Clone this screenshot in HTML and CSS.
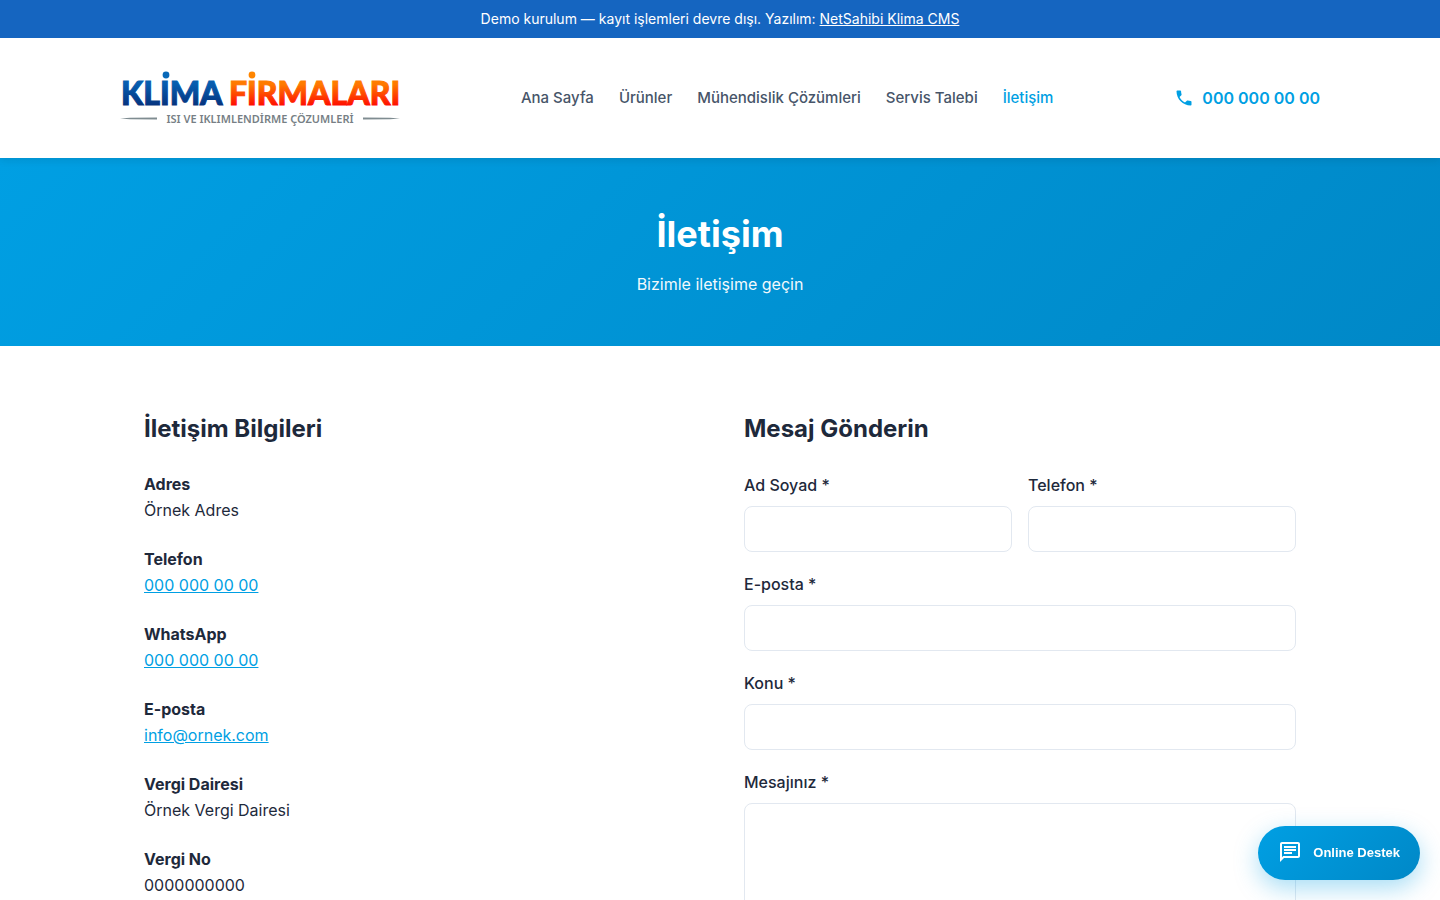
FILE: index.html
```html
<!DOCTYPE html>
<html lang="tr">
<head>
<meta charset="utf-8">
<meta name="viewport" content="width=device-width, initial-scale=1">
<title>İletişim</title>
<link rel="stylesheet" href="styles.css">
</head>
<body>
<div class="demo-bar">Demo kurulum — kayıt işlemleri devre dışı. Yazılım: <a href="#">NetSahibi Klima CMS</a></div>

<header class="site-header">
  <div class="header-inner">
    <a class="logo" href="#" aria-label="Klima Firmaları">
      <svg width="280" height="70" viewBox="0 0 280 70">
        <defs>
          <linearGradient id="blue" gradientUnits="userSpaceOnUse" x1="0" y1="8" x2="0" y2="42">
            <stop offset="0" stop-color="#0868b8"/><stop offset=".4" stop-color="#075cae"/><stop offset="1" stop-color="#05347f"/>
          </linearGradient>
          <linearGradient id="fire" gradientUnits="userSpaceOnUse" x1="0" y1="8" x2="0" y2="42">
            <stop offset="0" stop-color="#ff8a00"/><stop offset=".4" stop-color="#ff7800"/><stop offset="1" stop-color="#ff1000"/>
          </linearGradient>
        </defs>
        <text class="logo-word" x="1" y="42" fill="url(#blue)" stroke="url(#blue)">KLIMA</text>
        <circle cx="46" cy="12" r="3.4" fill="#0868b8"/>
        <text class="logo-word" x="109" y="42" fill="url(#fire)" stroke="url(#fire)">FIRMALARI</text>
        <circle cx="132" cy="12" r="3.4" fill="#ff8500"/>
        <path d="M0 55.5L10 54.8L37 54.4V56.6L10 56.2Z" fill="#7f8c91"/>
        <path d="M280 55.5L270 54.8L243 54.4V56.6L270 56.2Z" fill="#7f8c91"/>
        <text class="logo-tag" x="140" y="60">ISI VE IKLIMLENDİRME ÇÖZUMLERİ</text>
      </svg>
    </a>
    <nav class="nav">
      <a href="#">Ana Sayfa</a>
      <a href="#">Ürünler</a>
      <a href="#">Mühendislik Çözümleri</a>
      <a href="#">Servis Talebi</a>
      <a class="active" href="#">İletişim</a>
    </nav>
    <a class="phone" href="#">
      <svg width="20" height="20" viewBox="0 0 24 24" fill="currentColor" aria-hidden="true"><path d="M6.62 10.79c1.44 2.83 3.76 5.14 6.59 6.59l2.2-2.2c.27-.27.67-.36 1.02-.24 1.12.37 2.33.57 3.57.57.55 0 1 .45 1 1V20c0 .55-.45 1-1 1-9.39 0-17-7.61-17-17 0-.55.45-1 1-1h3.5c.55 0 1 .45 1 1 0 1.25.2 2.45.57 3.57.11.35.03.74-.25 1.02l-2.2 2.2z"/></svg>
      <span>000 000 00 00</span>
    </a>
  </div>
</header>

<section class="hero">
  <h1>İletişim</h1>
  <p>Bizimle iletişime geçin</p>
</section>

<main class="content">
  <section>
    <h2>İletişim Bilgileri</h2>
    <dl class="info">
      <div><dt>Adres</dt><dd>Örnek Adres</dd></div>
      <div><dt>Telefon</dt><dd><a href="#">000 000 00 00</a></dd></div>
      <div><dt>WhatsApp</dt><dd><a href="#">000 000 00 00</a></dd></div>
      <div><dt>E-posta</dt><dd><a href="#">info@ornek.com</a></dd></div>
      <div><dt>Vergi Dairesi</dt><dd>Örnek Vergi Dairesi</dd></div>
      <div><dt>Vergi No</dt><dd>0000000000</dd></div>
    </dl>
  </section>
  <section>
    <h2>Mesaj Gönderin</h2>
    <form class="form">
      <div class="form-row">
        <div class="field"><label for="name">Ad Soyad *</label><input id="name" type="text"></div>
        <div class="field"><label for="phone">Telefon *</label><input id="phone" type="tel"></div>
      </div>
      <div class="field"><label for="email">E-posta *</label><input id="email" type="email"></div>
      <div class="field"><label for="subject">Konu *</label><input id="subject" type="text"></div>
      <div class="field"><label for="message">Mesajınız *</label><textarea id="message" rows="6"></textarea></div>
    </form>
  </section>
</main>

<button class="chat" type="button">
  <svg width="24" height="24" viewBox="0 0 24 24" fill="currentColor" aria-hidden="true"><path d="M4 4h16v12H5.17L4 17.17V4m0-2c-1.1 0-1.99.9-1.99 2L2 22l4-4h14c1.1 0 2-.9 2-2V4c0-1.1-.9-2-2-2H4zm2 10h8v2H6v-2zm0-3h12v2H6V9zm0-3h12v2H6V6z"/></svg>
  <span>Online Destek</span>
</button>
</body>
</html>
```
FILE: styles.css
```css
* { box-sizing: border-box; margin: 0; padding: 0; }

body {
  font-family: Inter, "Liberation Sans", sans-serif;
  font-size: 16px;
  line-height: 26px;
  color: #1e293b;
  background: #fff;
}

a { color: #009fe3; }

.demo-bar {
  position: relative;
  z-index: 2;
  padding: 8px 16px;
  background: #1565c0;
  color: #fff;
  font-size: 14px;
  line-height: 22px;
  text-align: center;
}
.demo-bar a { color: inherit; }

.site-header {
  position: relative;
  z-index: 1;
  background: #fff;
  box-shadow: 0 2px 8px rgba(0, 0, 0, .1);
}
.header-inner {
  display: flex;
  align-items: center;
  justify-content: space-between;
  max-width: 1200px;
  min-height: 120px;
  margin: 0 auto;
}
.logo svg { display: block; }
.logo-word { font-family: Lato, sans-serif; font-size: 32px; font-weight: 900; stroke-width: 1px; }
.logo-tag { font-family: "Noto Sans", sans-serif; font-size: 11px; font-weight: 600; fill: #777f85; text-anchor: middle; }

.nav { display: flex; gap: 25px; }
.nav a { color: #475569; font-size: 15px; font-weight: 500; text-decoration: none; }
.nav .active { color: #009fe3; }

.phone { display: flex; align-items: center; gap: 8px; font-weight: 600; text-decoration: none; }

.hero {
  padding: 48px 24px 49px;
  background: linear-gradient(135deg, #009fe3, #0088c7);
  color: #fff;
  text-align: center;
}
.hero h1 { margin-bottom: 8px; font-size: 36px; line-height: 57px; font-weight: 700; }
.hero p { opacity: .95; }

.content {
  display: grid;
  grid-template-columns: 1fr 1fr;
  gap: 48px;
  max-width: 1200px;
  margin: 0 auto;
  padding: 64px 24px;
}
.content h2 { margin-bottom: 24px; font-size: 24px; line-height: 38px; font-weight: 700; }

.info { display: grid; gap: 24px; }
.info dt { font-weight: 700; line-height: 25px; }

.form { display: grid; gap: 20px; }
.form-row { display: grid; grid-template-columns: 1fr 1fr; gap: 16px; }
.field { display: grid; gap: 8px; }
.field label { line-height: 25px; font-weight: 500; }
.field input,
.field textarea {
  width: 100%;
  padding: 12px 16px;
  border: 1px solid #e2e8f0;
  border-radius: 8px;
  background: #fff;
  color: inherit;
  font: inherit;
}
.field input { height: 46px; }
.field textarea { display: block; resize: vertical; }

.form { gap: 19px; }
.field label { line-height: 26px; }

.chat {
  position: fixed;
  right: 20px;
  bottom: 20px;
  display: flex;
  align-items: center;
  gap: 11px;
  height: 54px;
  padding: 0 20px 2px;
  border: 0;
  border-radius: 27px;
  background: linear-gradient(135deg, #009fe3, #0088c7);
  box-shadow: 0 8px 24px rgba(0, 159, 227, .35);
  color: #fff;
  font: 700 13px "Liberation Sans", Arial, sans-serif;
}
```
